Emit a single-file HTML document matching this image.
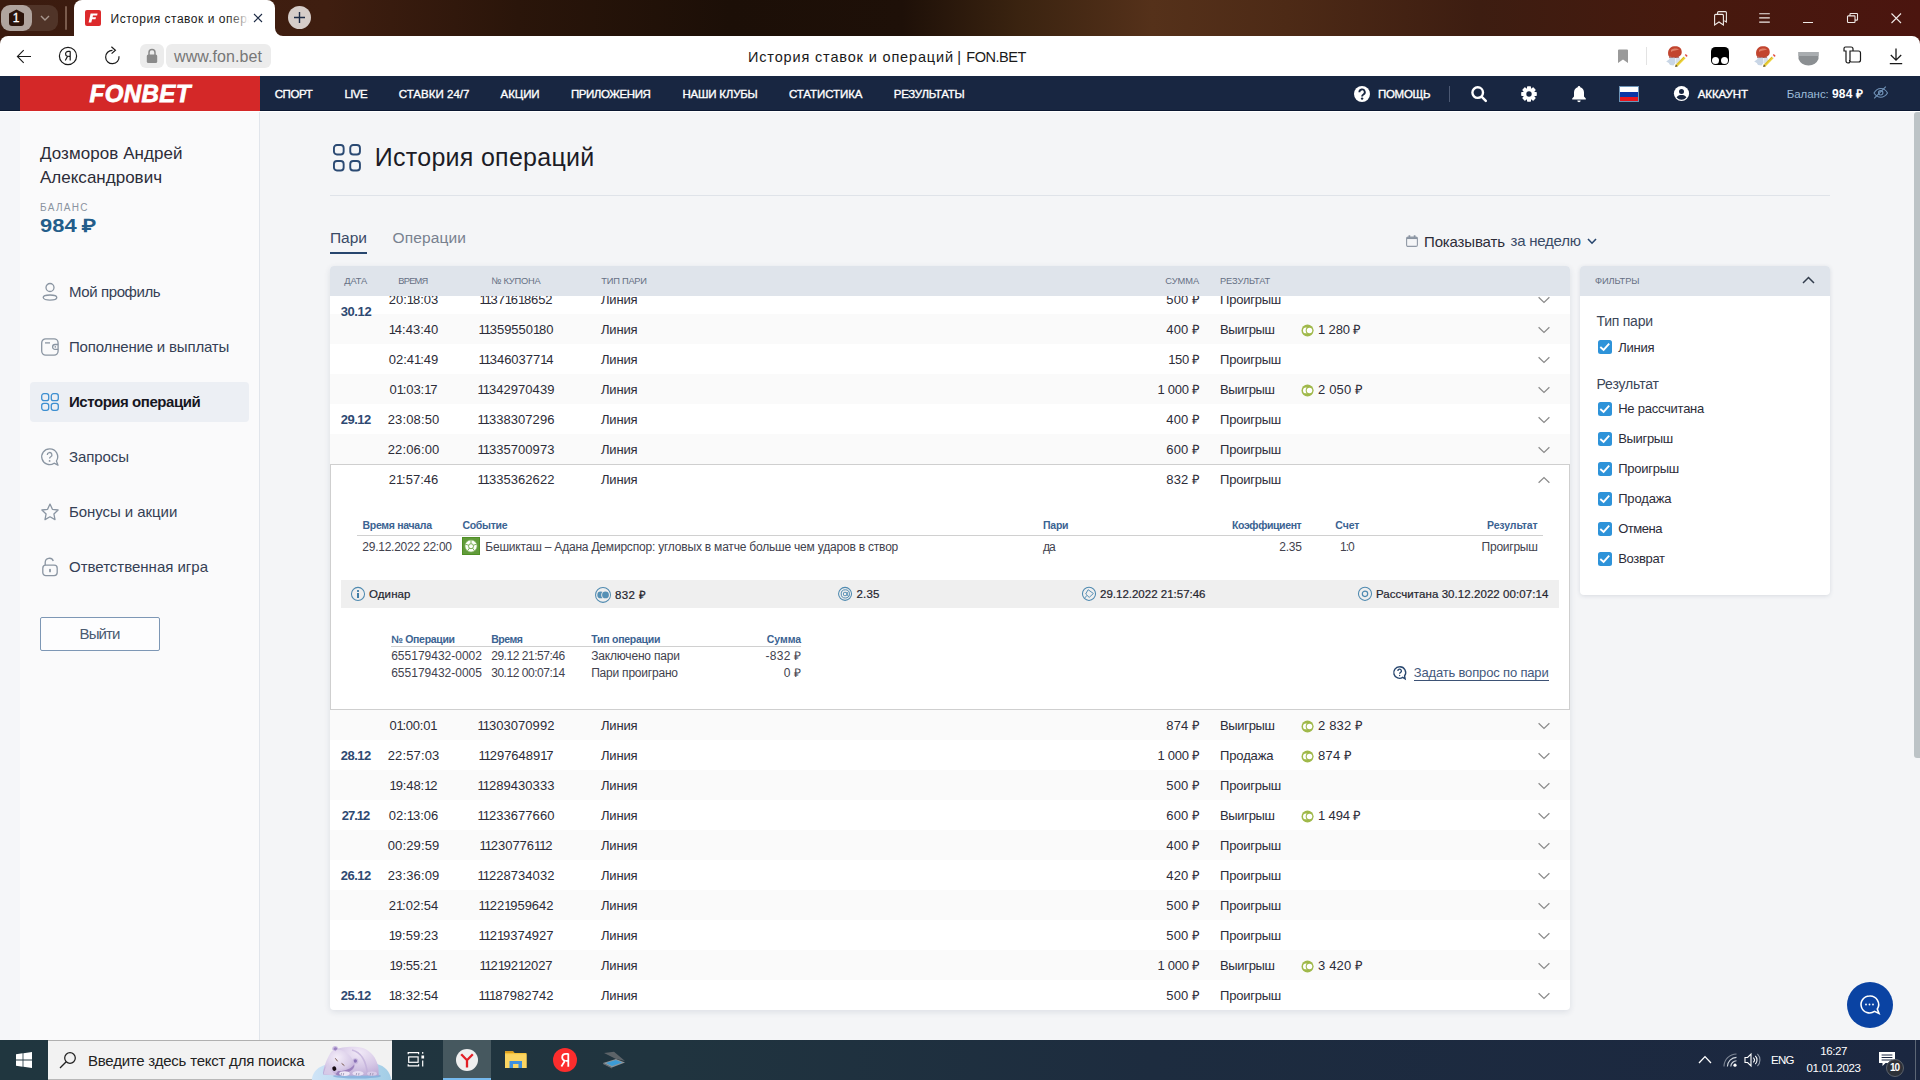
<!DOCTYPE html>
<html lang="ru"><head><meta charset="utf-8"><title>История ставок и операций | FON.BET</title>
<style>
*{box-sizing:border-box;margin:0;padding:0}
html,body{width:1920px;height:1080px;overflow:hidden;background:#f4f5f7;font-family:"Liberation Sans",sans-serif}
#root{position:relative;width:1920px;height:1080px;overflow:hidden;background:#f4f5f7}
.t{position:absolute;white-space:pre;font-family:"Liberation Sans",sans-serif}
.a{position:absolute}
svg{position:absolute;overflow:visible}
.t i{font-style:normal}

</style></head><body>
<div id="root">
<!-- browser tab strip -->
<div class="a" style="left:0;top:0;width:1920px;height:46px;background:linear-gradient(90deg,#3b1b0f 0%,#3f1e10 17%,#2a150a 27%,#1c0f07 38%,#1e1008 47%,#3a2310 53%,#55311a 60%,#4d2a16 67%,#3d1d11 77%,#46190e 88%,#4b150f 100%)"></div>
<div class="a" style="left:2px;top:5px;width:56px;height:26px;border-radius:9px;background:#503428"></div>
<div class="a" style="left:1px;top:5px;width:31px;height:26px;border-radius:9px;background:#b0a49e"></div>
<svg style="left:8px;top:9px" width="17" height="18" viewBox="0 0 17 18"><path d="M8.5 0.6 L16 4.6 V14 a3 3 0 0 1 -3 3 H4 a3 3 0 0 1 -3 -3 V4.6 Z" fill="#2b130a"/></svg>
<svg style="left:40px;top:14px" width="10" height="8" viewBox="0 0 10 8"><path d="M1 2 L5 6 L9 2" fill="none" stroke="#a8978f" stroke-width="1.4"/></svg>
<div class="a" style="left:65px;top:6px;width:2px;height:24px;background:#7a5b4c;border-radius:1px"></div>
<!-- active tab -->
<div class="a" style="left:74px;top:0;width:201px;height:36px;background:#fff;border-radius:8px 8px 0 0"></div>
<svg style="left:275px;top:28px" width="8" height="8" viewBox="0 0 8 8"><path d="M0 0 V8 H8 A8 8 0 0 1 0 0Z" fill="#fff"/></svg>
<div class="a" style="left:85px;top:10px;width:16px;height:16px;background:#dc2a2c;border-radius:2px"></div>
<svg style="left:88px;top:13px" width="10" height="10" viewBox="0 0 10 10"><path d="M2.6 0.5 H9.6 L9.1 2.6 H5 L4.6 4.2 H8 L7.5 6.2 H4.1 L3.3 9.5 H0.6 Z" fill="#fff"/></svg>
<div class="a" style="left:228px;top:8px;width:36px;height:22px;z-index:3;background:linear-gradient(90deg,rgba(255,255,255,0) 0%,rgba(255,255,255,.55) 36%,#fff 58%)"></div>
<svg style="left:253px;top:13px;z-index:4" width="10" height="10" viewBox="0 0 10 10"><path d="M1 1 L9 9 M9 1 L1 9" stroke="#1d2b45" stroke-width="1.1" fill="none"/></svg>
<div class="a" style="left:288px;top:6px;width:23px;height:23px;border-radius:50%;background:#d6cdc9"></div>
<svg style="left:293px;top:11px" width="13" height="13" viewBox="0 0 13 13"><path d="M6.5 1 V12 M1 6.5 H12" stroke="#1d2b45" stroke-width="1.4" fill="none"/></svg>
<!-- window controls -->
<svg style="left:1713.5px;top:10.5px" width="13" height="15" viewBox="0 0 13 15"><path d="M3.6 3.2 V1.6 a1 1 0 0 1 1 -1 H11.4 a1 1 0 0 1 1 1 V11 L10.4 9.8 M0.6 4.4 a1 1 0 0 1 1 -1 H8.4 a1 1 0 0 1 1 1 V14 L5 11 L0.6 14 Z" fill="none" stroke="#efe9e6" stroke-width="1.1"/></svg>
<svg style="left:1758.6px;top:12.6px" width="11" height="10" viewBox="0 0 11 10"><path d="M0.2 0.7 H10.8 M0.2 4.9 H10.8 M0.2 9.1 H10.8" stroke="#efe9e6" stroke-width="1.1"/></svg>
<div class="a" style="left:1803px;top:21.7px;width:10px;height:1.1px;background:#efe9e6"></div>
<svg style="left:1846.5px;top:12.8px" width="11" height="10" viewBox="0 0 11 10"><path d="M3 2.6 V1.2 a.7 .7 0 0 1 .7 -.7 H9.8 a.7 .7 0 0 1 .7 .7 V6.4 a.7 .7 0 0 1 -.7 .7 H8.2 M1.2 2.9 H7.3 a.7 .7 0 0 1 .7 .7 V8.8 a.7 .7 0 0 1 -.7 .7 H1.2 a.7 .7 0 0 1 -.7 -.7 V3.6 a.7 .7 0 0 1 .7 -.7Z" fill="none" stroke="#efe9e6" stroke-width="1.1"/></svg>
<svg style="left:1890.8px;top:12.8px" width="10.5" height="10.5" viewBox="0 0 10.5 10.5"><path d="M0.5 0.5 L10 10 M10 0.5 L0.5 10" stroke="#efe9e6" stroke-width="1.1"/></svg>

<!-- toolbar -->
<div class="a" style="left:0;top:36px;width:1920px;height:40px;background:#fff;border-radius:8px 8px 0 0"></div>
<svg style="left:16px;top:48px" width="16" height="17" viewBox="0 0 16 17"><path d="M15 8.5 H1.6 M7.7 2.2 L1.4 8.5 L7.7 14.8" fill="none" stroke="#1a1a1a" stroke-width="1.1"/></svg>
<svg style="left:58px;top:46px" width="20" height="20" viewBox="0 0 20 20"><circle cx="10" cy="10" r="8.6" fill="none" stroke="#1a1a1a" stroke-width="1.2"/><path d="M12.2 5.4 H10.3 C8.6 5.4 7.6 6.4 7.6 7.9 C7.6 9.2 8.3 10 9.5 10.3 L7.3 14.5 M12.2 5.2 V14.6 M12.2 10.4 H10.3" fill="none" stroke="#1a1a1a" stroke-width="1.2"/></svg>
<svg style="left:103.7px;top:45.6px" width="17" height="20" viewBox="0 0 17 20"><path d="M8.5 4.3 A6.7 6.7 0 1 0 15.0 10.2" fill="none" stroke="#1a1a1a" stroke-width="1.2"/><path d="M7.4 0.8 L11.4 4.2 L7.6 7.6" fill="none" stroke="#1a1a1a" stroke-width="1.2"/></svg>
<div class="a" style="left:140px;top:44px;width:24px;height:24px;border-radius:6px;background:#ececec"></div>
<div class="a" style="left:166px;top:44px;width:105px;height:24px;border-radius:6px;background:#ececec"></div>
<svg style="left:146px;top:48px" width="12" height="16" viewBox="0 0 12 16"><rect x="0.8" y="6.5" width="10.4" height="8.5" rx="1.6" fill="#8a8a8a"/><path d="M3 7 V4.5 a3 3 0 0 1 6 0 V7" fill="none" stroke="#8a8a8a" stroke-width="1.5"/></svg>
<!-- toolbar right icons -->
<svg style="left:1617px;top:49px" width="12" height="15" viewBox="0 0 12 15"><path d="M1 1.5 a1 1 0 0 1 1 -1 H10 a1 1 0 0 1 1 1 V14 L6 10.5 L1 14Z" fill="#9a9a9a"/></svg>
<div class="a" style="left:1646px;top:47px;width:1px;height:18px;background:#e3e3e3"></div>
<!-- ext icon 1 (kolobok) -->
<svg style="left:1665px;top:45px" width="24" height="24" viewBox="0 0 24 24"><path d="M3.6 11 C2 6 4.5 1.6 9 1.2 C13 0.8 16.5 2 16.7 6.5 C17 10 15 12 10.5 12 C7 12.2 4.5 12 3.6 11Z" fill="#c2452f"/><path d="M6 5 C8 3 12 3 14 4.5 C12 5 8 5.5 6 7Z" fill="#e58a72" opacity=".85"/><path d="M4 11.3 C6 12.3 10 12.4 14 11.6 L14 13 L4.5 13Z" fill="#9c2f22"/><path d="M5 12.5 L10 12.8 L10.5 18 L8.5 20.5 L5 20 L3.8 18 L1.2 16.6 L4 14.5Z" fill="#c9d6e6"/><path d="M10.5 12.8 L14.5 12.4 L15.5 16 L11 19 Z" fill="#d6e0ec"/><path d="M10.8 19.6 L18.6 11.4 L20.6 13.2 L12.8 21.2 L10.2 22Z" fill="#ecd23a"/><path d="M12 19.5 L19.2 12" stroke="#c9a81d" stroke-width="0.7"/><path d="M18.6 11.4 L19.8 10 L21.8 12 L20.6 13.2Z" fill="#f4f4f4"/><path d="M19.8 10 L20.8 9 L22.6 10.8 L21.8 12Z" fill="#e2453a"/><path d="M10.8 19.6 L12.8 21.2 L10.2 22Z" fill="#5a4a3a"/></svg>
<div class="a" style="left:1711px;top:47px;width:18px;height:18px;border-radius:4.5px;background:#000"></div>
<div class="a" style="left:1712.2px;top:56.6px;width:7px;height:7px;border-radius:50%;background:#fff"></div>
<div class="a" style="left:1720.8px;top:56.6px;width:7px;height:7px;border-radius:50%;background:#fff"></div>
<svg style="left:1753px;top:45px" width="24" height="24" viewBox="0 0 24 24"><path d="M3.6 11 C2 6 4.5 1.6 9 1.2 C13 0.8 16.5 2 16.7 6.5 C17 10 15 12 10.5 12 C7 12.2 4.5 12 3.6 11Z" fill="#c2452f"/><path d="M6 5 C8 3 12 3 14 4.5 C12 5 8 5.5 6 7Z" fill="#e58a72" opacity=".85"/><path d="M4 11.3 C6 12.3 10 12.4 14 11.6 L14 13 L4.5 13Z" fill="#9c2f22"/><path d="M5 12.5 L10 12.8 L10.5 18 L8.5 20.5 L5 20 L3.8 18 L1.2 16.6 L4 14.5Z" fill="#c9d6e6"/><path d="M10.5 12.8 L14.5 12.4 L15.5 16 L11 19 Z" fill="#d6e0ec"/><path d="M10.8 19.6 L18.6 11.4 L20.6 13.2 L12.8 21.2 L10.2 22Z" fill="#ecd23a"/><path d="M12 19.5 L19.2 12" stroke="#c9a81d" stroke-width="0.7"/><path d="M18.6 11.4 L19.8 10 L21.8 12 L20.6 13.2Z" fill="#f4f4f4"/><path d="M19.8 10 L20.8 9 L22.6 10.8 L21.8 12Z" fill="#e2453a"/><path d="M10.8 19.6 L12.8 21.2 L10.2 22Z" fill="#5a4a3a"/></svg>
<svg style="left:1798px;top:51px" width="21" height="15" viewBox="0 0 21 15"><path d="M0.5 1 H20.5 V8 Q18 14 10.5 14.5 Q3 14 0.5 8Z" fill="#8b8f92"/><path d="M0.5 1 H20.5 V5 H0.5Z" fill="#a9adb0"/></svg>
<svg style="left:1843px;top:46px" width="19" height="19" viewBox="0 0 19 19"><path d="M2.5 1 H8 a2 2 0 0 1 2 2 V5 H7 V15 a2 2 0 0 1 -4 0 V5 H1 V2.5 A1.5 1.5 0 0 1 2.5 1Z M8 5 H15.5 a2 2 0 0 1 2 2 V14 a2 2 0 0 1 -2 2 H8.5 a2 2 0 0 1 -2 -2" fill="none" stroke="#1a1a1a" stroke-width="1.2"/></svg>
<svg style="left:1889px;top:48px" width="14" height="17" viewBox="0 0 14 17"><path d="M7 0.5 V12 M1.8 7 L7 12.2 L12.2 7 M0.8 15.7 H13.2" fill="none" stroke="#1a1a1a" stroke-width="1.3"/></svg>

<!-- site header -->
<div class="a" style="left:0;top:76px;width:1920px;height:35px;background:#182641"></div>
<div class="a" style="left:0;top:110px;width:1920px;height:1px;background:#0a1730"></div>
<div class="a" style="left:0;top:111px;width:1920px;height:1px;background:#fff"></div>
<div class="a" style="left:20px;top:76px;width:240px;height:35px;background:#d42828"></div>
<!-- header icons -->
<svg style="left:1353px;top:85px" width="18" height="18" viewBox="0 0 18 18"><circle cx="9" cy="9" r="8" fill="#fff"/><path d="M6.4 7.2 a2.7 2.7 0 1 1 4 2.3 c-.9 .5 -1.3 1 -1.3 2" fill="none" stroke="#182641" stroke-width="1.9"/><circle cx="9.1" cy="13.6" r="1.2" fill="#182641"/></svg>
<div class="a" style="left:1449px;top:86px;width:1px;height:16px;background:#4b5872"></div>
<svg style="left:1470px;top:85px" width="18" height="18" viewBox="0 0 18 18"><circle cx="7.7" cy="7.6" r="5.3" fill="none" stroke="#fff" stroke-width="2.4"/><path d="M11.8 11.8 L15.8 15.8" stroke="#fff" stroke-width="2.5" stroke-linecap="round"/></svg>
<svg style="left:1520px;top:85px" width="18" height="18" viewBox="0 0 18 18"><g fill="#fff"><circle cx="9" cy="9" r="6"/><rect x="7" y="1.2" width="4" height="15.6" rx="0.7"/><rect x="7" y="1.2" width="4" height="15.6" rx="0.7" transform="rotate(45 9 9)"/><rect x="7" y="1.2" width="4" height="15.6" rx="0.7" transform="rotate(90 9 9)"/><rect x="7" y="1.2" width="4" height="15.6" rx="0.7" transform="rotate(135 9 9)"/></g><circle cx="9" cy="9" r="2.7" fill="#182641"/></svg>
<svg style="left:1571px;top:85px" width="16" height="18" viewBox="0 0 16 18"><path d="M8 1 C7.2 1 6.7 1.6 6.7 2.3 C4.2 3 3 5 3 7.5 V11.5 L1.2 13.6 V14.4 H14.8 V13.6 L13 11.5 V7.5 C13 5 11.8 3 9.3 2.3 C9.3 1.6 8.8 1 8 1Z" fill="#fff"/><path d="M6.3 15.5 a1.7 1.7 0 0 0 3.4 0Z" fill="#fff"/></svg>
<div class="a" style="left:1619px;top:86px;width:20px;height:16px;background:#fff;border:1px solid #6d95b8"></div>
<div class="a" style="left:1620px;top:92px;width:18px;height:5px;background:#0a36a6"></div>
<div class="a" style="left:1620px;top:97px;width:18px;height:4px;background:#e8161e"></div>
<svg style="left:1673px;top:85.4px" width="17" height="17" viewBox="0 0 17 17"><circle cx="8.5" cy="8.5" r="7.6" fill="#fff"/><circle cx="8.5" cy="6.4" r="2.5" fill="#182641"/><path d="M3.6 12.6 C4.6 10.6 6.4 10 8.5 10 C10.6 10 12.4 10.6 13.4 12.6 A6.5 6.5 0 0 1 3.6 12.6Z" fill="#182641"/></svg>
<svg style="left:1872.5px;top:85.5px" width="16" height="14" viewBox="0 0 16 14"><path d="M1 7 C3 3.6 5.3 2.5 7.7 2.5 C10.1 2.5 12.6 3.6 14.5 7 C12.6 10 10.1 11.2 7.7 11.2 C5.3 11.2 3 10 1 7Z" fill="none" stroke="#7193b8" stroke-width="1.1"/><circle cx="7.7" cy="6.8" r="2.2" fill="none" stroke="#7193b8" stroke-width="1.1"/><path d="M12.8 0.6 L1.2 12.3" stroke="#7193b8" stroke-width="1.1"/></svg>

<!-- sidebar -->
<div class="a" style="left:0;top:112px;width:20px;height:928px;background:#f5f6f9"></div>
<div class="a" style="left:20px;top:112px;width:240px;height:928px;background:#fafafb;border-right:1px solid #e1e5eb"></div>
<div class="a" style="left:30px;top:382px;width:219px;height:40px;border-radius:4px;background:#eceff4"></div>
<div class="a" style="left:40px;top:617px;width:120px;height:34px;border:1px solid #7d97b5;border-radius:2px;background:#fdfdfe"></div>
<!-- sidebar icons -->
<svg style="left:41px;top:282px" width="18" height="20" viewBox="0 0 18 20"><circle cx="9" cy="5.5" r="4" fill="none" stroke="#8a95a2" stroke-width="1.3"/><ellipse cx="9" cy="15.6" rx="6.8" ry="2.6" fill="none" stroke="#8a95a2" stroke-width="1.3"/></svg>
<svg style="left:41px;top:338px" width="18" height="18" viewBox="0 0 18 18"><rect x="0.7" y="0.9" width="16.4" height="16.2" rx="4" fill="none" stroke="#8a95a2" stroke-width="1.3"/><path d="M4 4.9 H9" stroke="#8a95a2" stroke-width="1.3"/><path d="M17.1 6.5 H14 a2.4 2.4 0 0 0 0 4.8 H17.1" fill="none" stroke="#8a95a2" stroke-width="1.3"/><circle cx="14.3" cy="8.9" r="0.8" fill="#8a95a2"/></svg>
<svg style="left:41px;top:393px" width="18" height="18" viewBox="0 0 18 18"><g fill="none" stroke="#3d8fd1" stroke-width="1.3"><rect x="0.7" y="0.7" width="7" height="7" rx="2.2"/><rect x="10.3" y="0.7" width="7" height="7" rx="2.2"/><rect x="0.7" y="10.3" width="7" height="7" rx="2.2"/><rect x="10.3" y="10.3" width="7" height="7" rx="2.2"/></g></svg>
<svg style="left:41px;top:448px" width="18" height="18" viewBox="0 0 18 18"><path d="M8.6 0.8 a7.9 7.9 0 1 0 4.5 14.4 L17 17.2 L15.4 13 A7.9 7.9 0 0 0 8.6 0.8Z" fill="none" stroke="#8a95a2" stroke-width="1.3" stroke-linejoin="round"/><path d="M6.3 6.9 a2.3 2.3 0 1 1 3.5 1.9 c-.8 .5 -1.2 .9 -1.2 1.8" fill="none" stroke="#8a95a2" stroke-width="1.3"/><circle cx="8.6" cy="12.9" r="0.9" fill="#8a95a2"/></svg>
<svg style="left:41px;top:503px" width="18" height="18" viewBox="0 0 18 18"><path d="M9 1.1 L11.4 6.3 L17.1 7 L12.9 10.9 L14 16.6 L9 13.8 L4 16.6 L5.1 10.9 L0.9 7 L6.6 6.3Z" fill="none" stroke="#8a95a2" stroke-width="1.3" stroke-linejoin="round"/></svg>
<svg style="left:42px;top:557px" width="17" height="20" viewBox="0 0 17 20"><rect x="0.8" y="8.2" width="14.4" height="10.4" rx="3" fill="none" stroke="#8a95a2" stroke-width="1.3"/><path d="M3.2 8 V5.4 a4.2 4.2 0 0 1 8.1 -1.5" fill="none" stroke="#8a95a2" stroke-width="1.3"/><path d="M8 12.6 V14.4" stroke="#8a95a2" stroke-width="1.8" stroke-linecap="round"/></svg>

<!-- main title -->
<svg style="left:332.7px;top:144px" width="28.3" height="27.4" viewBox="0 0 28.3 27.4"><g fill="none" stroke="#2b4a73" stroke-width="1.9"><rect x="0.95" y="0.95" width="9.7" height="9.5" rx="3"/><rect x="17.25" y="0.95" width="9.7" height="9.5" rx="3"/><rect x="0.95" y="16.95" width="9.7" height="9.5" rx="3"/><rect x="17.25" y="16.95" width="9.7" height="9.5" rx="3"/></g></svg>
<div class="a" style="left:330px;top:195px;width:1500px;height:1px;background:#dfe3e9"></div>
<div class="a" style="left:330px;top:252px;width:37px;height:2px;background:#27466e"></div>
<svg style="left:1406px;top:235px" width="12" height="12" viewBox="0 0 12 12"><rect x="0.6" y="2" width="10.8" height="9.4" rx="1.4" fill="none" stroke="#9099a6" stroke-width="1.1"/><path d="M0.8 3.1 H11.2" stroke="#8a94a2" stroke-width="1.9"/><path d="M3.4 0.3 V2.6 M8.6 0.3 V2.6" stroke="#8a94a2" stroke-width="1.7"/></svg>
<svg style="left:1587px;top:238px" width="10" height="7" viewBox="0 0 10 7"><path d="M1 1 L5 5.2 L9 1" fill="none" stroke="#27466e" stroke-width="1.6"/></svg>

<!-- table -->
<div class="a" style="left:330px;top:266px;width:1240px;height:744px;background:#fff;border-radius:4px;box-shadow:0 2px 6px rgba(30,50,80,.11)"></div>
<svg style="left:1537px;top:296px" width="14" height="8" viewBox="0 0 14 8"><path d="M1.6 1.2 L7 6.5 L12.4 1.2" fill="none" stroke="#8a8a8a" stroke-width="1.2"/></svg>
<div class="a" style="left:330px;top:314px;width:1240px;height:30px;background:#fafafa"></div>
<svg style="left:1537px;top:326px" width="14" height="8" viewBox="0 0 14 8"><path d="M1.6 1.2 L7 6.5 L12.4 1.2" fill="none" stroke="#8a8a8a" stroke-width="1.2"/></svg>
<svg style="left:1300.6px;top:323.6px" width="13" height="13" viewBox="0 0 13 13"><circle cx="6.5" cy="6.4" r="6" fill="#a0b94b"/><circle cx="4.9" cy="6.4" r="2.9" fill="#fff"/><circle cx="8.5" cy="6.4" r="3.8" fill="#a0b94b"/><circle cx="8.5" cy="6.4" r="2.75" fill="#fff"/></svg>
<svg style="left:1537px;top:356px" width="14" height="8" viewBox="0 0 14 8"><path d="M1.6 1.2 L7 6.5 L12.4 1.2" fill="none" stroke="#8a8a8a" stroke-width="1.2"/></svg>
<div class="a" style="left:330px;top:374px;width:1240px;height:30px;background:#fafafa"></div>
<svg style="left:1537px;top:386px" width="14" height="8" viewBox="0 0 14 8"><path d="M1.6 1.2 L7 6.5 L12.4 1.2" fill="none" stroke="#8a8a8a" stroke-width="1.2"/></svg>
<svg style="left:1300.6px;top:383.6px" width="13" height="13" viewBox="0 0 13 13"><circle cx="6.5" cy="6.4" r="6" fill="#a0b94b"/><circle cx="4.9" cy="6.4" r="2.9" fill="#fff"/><circle cx="8.5" cy="6.4" r="3.8" fill="#a0b94b"/><circle cx="8.5" cy="6.4" r="2.75" fill="#fff"/></svg>
<svg style="left:1537px;top:416px" width="14" height="8" viewBox="0 0 14 8"><path d="M1.6 1.2 L7 6.5 L12.4 1.2" fill="none" stroke="#8a8a8a" stroke-width="1.2"/></svg>
<div class="a" style="left:330px;top:434px;width:1240px;height:30px;background:#fafafa"></div>
<svg style="left:1537px;top:446px" width="14" height="8" viewBox="0 0 14 8"><path d="M1.6 1.2 L7 6.5 L12.4 1.2" fill="none" stroke="#8a8a8a" stroke-width="1.2"/></svg>
<div class="a" style="left:330px;top:710px;width:1240px;height:30px;background:#fafafa"></div>
<svg style="left:1537px;top:722px" width="14" height="8" viewBox="0 0 14 8"><path d="M1.6 1.2 L7 6.5 L12.4 1.2" fill="none" stroke="#8a8a8a" stroke-width="1.2"/></svg>
<svg style="left:1300.6px;top:719.6px" width="13" height="13" viewBox="0 0 13 13"><circle cx="6.5" cy="6.4" r="6" fill="#a0b94b"/><circle cx="4.9" cy="6.4" r="2.9" fill="#fff"/><circle cx="8.5" cy="6.4" r="3.8" fill="#a0b94b"/><circle cx="8.5" cy="6.4" r="2.75" fill="#fff"/></svg>
<svg style="left:1537px;top:752px" width="14" height="8" viewBox="0 0 14 8"><path d="M1.6 1.2 L7 6.5 L12.4 1.2" fill="none" stroke="#8a8a8a" stroke-width="1.2"/></svg>
<svg style="left:1300.6px;top:749.6px" width="13" height="13" viewBox="0 0 13 13"><circle cx="6.5" cy="6.4" r="6" fill="#a0b94b"/><circle cx="4.9" cy="6.4" r="2.9" fill="#fff"/><circle cx="8.5" cy="6.4" r="3.8" fill="#a0b94b"/><circle cx="8.5" cy="6.4" r="2.75" fill="#fff"/></svg>
<div class="a" style="left:330px;top:770px;width:1240px;height:30px;background:#fafafa"></div>
<svg style="left:1537px;top:782px" width="14" height="8" viewBox="0 0 14 8"><path d="M1.6 1.2 L7 6.5 L12.4 1.2" fill="none" stroke="#8a8a8a" stroke-width="1.2"/></svg>
<svg style="left:1537px;top:812px" width="14" height="8" viewBox="0 0 14 8"><path d="M1.6 1.2 L7 6.5 L12.4 1.2" fill="none" stroke="#8a8a8a" stroke-width="1.2"/></svg>
<svg style="left:1300.6px;top:809.6px" width="13" height="13" viewBox="0 0 13 13"><circle cx="6.5" cy="6.4" r="6" fill="#a0b94b"/><circle cx="4.9" cy="6.4" r="2.9" fill="#fff"/><circle cx="8.5" cy="6.4" r="3.8" fill="#a0b94b"/><circle cx="8.5" cy="6.4" r="2.75" fill="#fff"/></svg>
<div class="a" style="left:330px;top:830px;width:1240px;height:30px;background:#fafafa"></div>
<svg style="left:1537px;top:842px" width="14" height="8" viewBox="0 0 14 8"><path d="M1.6 1.2 L7 6.5 L12.4 1.2" fill="none" stroke="#8a8a8a" stroke-width="1.2"/></svg>
<svg style="left:1537px;top:872px" width="14" height="8" viewBox="0 0 14 8"><path d="M1.6 1.2 L7 6.5 L12.4 1.2" fill="none" stroke="#8a8a8a" stroke-width="1.2"/></svg>
<div class="a" style="left:330px;top:890px;width:1240px;height:30px;background:#fafafa"></div>
<svg style="left:1537px;top:902px" width="14" height="8" viewBox="0 0 14 8"><path d="M1.6 1.2 L7 6.5 L12.4 1.2" fill="none" stroke="#8a8a8a" stroke-width="1.2"/></svg>
<svg style="left:1537px;top:932px" width="14" height="8" viewBox="0 0 14 8"><path d="M1.6 1.2 L7 6.5 L12.4 1.2" fill="none" stroke="#8a8a8a" stroke-width="1.2"/></svg>
<div class="a" style="left:330px;top:950px;width:1240px;height:30px;background:#fafafa"></div>
<svg style="left:1537px;top:962px" width="14" height="8" viewBox="0 0 14 8"><path d="M1.6 1.2 L7 6.5 L12.4 1.2" fill="none" stroke="#8a8a8a" stroke-width="1.2"/></svg>
<svg style="left:1300.6px;top:959.6px" width="13" height="13" viewBox="0 0 13 13"><circle cx="6.5" cy="6.4" r="6" fill="#a0b94b"/><circle cx="4.9" cy="6.4" r="2.9" fill="#fff"/><circle cx="8.5" cy="6.4" r="3.8" fill="#a0b94b"/><circle cx="8.5" cy="6.4" r="2.75" fill="#fff"/></svg>
<svg style="left:1537px;top:992px" width="14" height="8" viewBox="0 0 14 8"><path d="M1.6 1.2 L7 6.5 L12.4 1.2" fill="none" stroke="#8a8a8a" stroke-width="1.2"/></svg>
<div class="a" style="left:330px;top:266px;width:1240px;height:30px;background:#dfe4eb;border-radius:4px 4px 0 0;z-index:1"></div>
<!-- expanded -->
<div class="a" style="left:330px;top:464px;width:1240px;height:246px;background:#fff;border:1px solid #cfcfcf"></div>
<div class="a" style="left:357px;top:535px;width:1186px;height:1px;background:#d0d0d0"></div>
<div class="a" style="left:341px;top:580px;width:1218px;height:28px;background:#efefef"></div>
<div class="a" style="left:391px;top:646px;width:410px;height:1px;background:#d0d0d0"></div>
<div class="a" style="left:1413.5px;top:680px;width:135.5px;height:1px;background:#3d5275"></div>
<!-- soccer icon -->
<div class="a" style="left:462px;top:537px;width:18px;height:18px;background:#619b3a;border:1px solid #4f8f25"></div>
<svg style="left:462px;top:537px" width="18" height="18" viewBox="0 0 18 18"><circle cx="9" cy="9" r="6" fill="#fbfdf8"/><circle cx="9" cy="9.2" r="2.5" fill="none" stroke="#6ea64a" stroke-width="0.9"/><path d="M9.00 6.50 L9.00 2.90 M6.62 8.23 L3.20 7.11 M11.38 8.23 L14.80 7.11 M7.53 11.02 L5.41 13.94 M10.47 11.02 L12.59 13.94" stroke="#6ea64a" stroke-width="0.9" fill="none"/><circle cx="9" cy="9" r="6" fill="none" stroke="#8bb96d" stroke-width="0.6"/></svg>
<!-- bar icons -->
<svg style="left:351px;top:587px" width="14" height="14" viewBox="0 0 14 14"><circle cx="7" cy="6.9" r="6.55" fill="none" stroke="#4f8ab0" stroke-width="1.05"/><path d="M7 6.1 V10.9" stroke="#3f7da6" stroke-width="2"/><rect x="6" y="3.1" width="2" height="1.8" fill="#3f7da6"/></svg>
<svg style="left:595px;top:587px" width="16" height="16" viewBox="0 0 16 16"><circle cx="8" cy="7.9" r="7.45" fill="none" stroke="#4f8ab0" stroke-width="1.05"/><circle cx="5.7" cy="7.9" r="3.4" fill="#5590b5"/><circle cx="10.5" cy="7.9" r="4.3" fill="#efefef"/><circle cx="10.5" cy="7.9" r="3.4" fill="#5590b5"/></svg>
<svg style="left:838px;top:587px" width="14" height="14" viewBox="0 0 14 14"><circle cx="7.05" cy="6.85" r="6.5" fill="none" stroke="#4f8ab0" stroke-width="1.05"/><circle cx="7.3" cy="6.9" r="4.1" fill="none" stroke="#4f8ab0" stroke-width="1"/><rect x="5.5" y="5.4" width="3.2" height="3.2" rx="0.8" fill="none" stroke="#4f8ab0" stroke-width="1"/><path d="M9.3 5 V8.2 a1.2 1.2 0 0 0 2.1 .5" fill="none" stroke="#4f8ab0" stroke-width="0.9"/></svg>
<svg style="left:1082px;top:587px" width="14" height="14" viewBox="0 0 14 14"><circle cx="7" cy="6.85" r="6.55" fill="none" stroke="#4f8ab0" stroke-width="1.05"/><path d="M6.1 2.7 L11.4 6.5 L7.2 10.4 L3.7 7 Z" fill="none" stroke="#5a92b7" stroke-width="1" stroke-linejoin="round"/><path d="M4.9 8.4 L2.9 10.9" stroke="#5a92b7" stroke-width="1"/></svg>
<svg style="left:1358px;top:587px" width="14" height="14" viewBox="0 0 14 14"><circle cx="7" cy="6.85" r="6.55" fill="none" stroke="#4f8ab0" stroke-width="1.05"/><circle cx="7" cy="6.85" r="2.7" fill="none" stroke="#4f8ab0" stroke-width="1.2"/></svg>
<svg style="left:1393px;top:666.3px" width="14" height="14" viewBox="0 0 15 15"><path d="M7 0.8 a6.2 6.2 0 1 0 3.4 11.4 L13 13.8 L12.4 10.6 A6.2 6.2 0 0 0 7 0.8Z" fill="none" stroke="#27466e" stroke-width="1.5"/><path d="M5.2 5.4 a1.9 1.9 0 1 1 2.8 1.6 c-.6 .4 -.9 .7 -.9 1.4" fill="none" stroke="#27466e" stroke-width="1.4"/><circle cx="7.1" cy="10.2" r="0.75" fill="#27466e"/></svg>
<svg style="left:1537px;top:476px" width="14" height="8" viewBox="0 0 14 8"><path d="M1.6 6.8 L7 1.5 L12.4 6.8" fill="none" stroke="#8a8a8a" stroke-width="1.2"/></svg>

<!-- filters -->
<div class="a" style="left:1580px;top:266px;width:250px;height:329px;background:#fff;border-radius:4px;box-shadow:0 1px 4px rgba(30,50,80,.13)"></div>
<div class="a" style="left:1580px;top:266px;width:250px;height:30px;background:#dfe4eb;border-radius:4px 4px 0 0"></div>
<svg style="left:1802px;top:276px" width="13" height="8" viewBox="0 0 13 8"><path d="M1 7 L6.5 1.5 L12 7" fill="none" stroke="#333d4d" stroke-width="1.5"/></svg>
<div class="a" style="left:1598px;top:340.0px;width:14px;height:14px;border-radius:2.5px;background:#2e93d9"></div>
<svg style="left:1598px;top:340.0px" width="14" height="14" viewBox="0 0 14 14"><path d="M2.3 7 L5.6 9.9 L11.2 3.7" fill="none" stroke="#fff" stroke-width="1.9"/></svg>
<div class="a" style="left:1598px;top:401.8px;width:14px;height:14px;border-radius:2.5px;background:#2e93d9"></div>
<svg style="left:1598px;top:401.8px" width="14" height="14" viewBox="0 0 14 14"><path d="M2.3 7 L5.6 9.9 L11.2 3.7" fill="none" stroke="#fff" stroke-width="1.9"/></svg>
<div class="a" style="left:1598px;top:431.8px;width:14px;height:14px;border-radius:2.5px;background:#2e93d9"></div>
<svg style="left:1598px;top:431.8px" width="14" height="14" viewBox="0 0 14 14"><path d="M2.3 7 L5.6 9.9 L11.2 3.7" fill="none" stroke="#fff" stroke-width="1.9"/></svg>
<div class="a" style="left:1598px;top:461.8px;width:14px;height:14px;border-radius:2.5px;background:#2e93d9"></div>
<svg style="left:1598px;top:461.8px" width="14" height="14" viewBox="0 0 14 14"><path d="M2.3 7 L5.6 9.9 L11.2 3.7" fill="none" stroke="#fff" stroke-width="1.9"/></svg>
<div class="a" style="left:1598px;top:491.8px;width:14px;height:14px;border-radius:2.5px;background:#2e93d9"></div>
<svg style="left:1598px;top:491.8px" width="14" height="14" viewBox="0 0 14 14"><path d="M2.3 7 L5.6 9.9 L11.2 3.7" fill="none" stroke="#fff" stroke-width="1.9"/></svg>
<div class="a" style="left:1598px;top:521.8px;width:14px;height:14px;border-radius:2.5px;background:#2e93d9"></div>
<svg style="left:1598px;top:521.8px" width="14" height="14" viewBox="0 0 14 14"><path d="M2.3 7 L5.6 9.9 L11.2 3.7" fill="none" stroke="#fff" stroke-width="1.9"/></svg>
<div class="a" style="left:1598px;top:551.8px;width:14px;height:14px;border-radius:2.5px;background:#2e93d9"></div>
<svg style="left:1598px;top:551.8px" width="14" height="14" viewBox="0 0 14 14"><path d="M2.3 7 L5.6 9.9 L11.2 3.7" fill="none" stroke="#fff" stroke-width="1.9"/></svg>

<!-- chat button -->
<div class="a" style="left:1847px;top:982px;width:46px;height:46px;border-radius:50%;background:#0a43a3"></div>
<svg style="left:1858px;top:993px" width="24" height="24" viewBox="0 0 24 24"><path d="M11.5 3 a8.5 8.5 0 1 0 5 15.4 L21 20.5 L19.3 16 A8.5 8.5 0 0 0 11.5 3Z" fill="none" stroke="#fff" stroke-width="1.6"/><circle cx="8" cy="11.5" r="0.9" fill="#fff"/><circle cx="11.5" cy="11.5" r="0.9" fill="#fff"/><circle cx="15" cy="11.5" r="0.9" fill="#fff"/></svg>
<!-- scrollbar thumb -->
<div class="a" style="left:1914px;top:112px;width:6px;height:646px;background:#bcc3c6;border-radius:3px 0 0 3px"></div>

<!-- taskbar -->
<div class="a" style="left:0;top:1040px;width:1920px;height:40px;background:linear-gradient(90deg,#20363f 0%,#20343f 35%,#1d2c3f 60%,#1b2740 100%)"></div>
<div class="a" style="left:48px;top:1040px;width:344px;height:40px;background:#f2f2f2;border-top:1px solid #b0b0b0;border-bottom:1px solid #b8b8b8"></div>
<svg style="left:16px;top:1052px" width="16" height="16" viewBox="0 0 16 16"><path d="M0 2.2 L6.6 1.3 V7.6 H0Z M7.4 1.2 L16 0 V7.6 H7.4Z M0 8.4 H6.6 V14.7 L0 13.8Z M7.4 8.4 H16 V16 L7.4 14.8Z" fill="#fff"/></svg>
<svg style="left:59px;top:1051px" width="18" height="18" viewBox="0 0 18 18"><circle cx="11" cy="7" r="5.3" fill="none" stroke="#222" stroke-width="1.25"/><path d="M7.2 10.8 L1 17" stroke="#222" stroke-width="1.3"/></svg>
<!-- bear -->
<svg style="left:305px;top:1041px;overflow:hidden" width="87" height="39" viewBox="0 3 87 39"><defs>
<linearGradient id="ice" x1="0" x2="1" y1="0" y2="0"><stop offset="0" stop-color="#cfe4f7"/><stop offset="1" stop-color="#a2cde6"/></linearGradient>
<radialGradient id="bd" cx="0.55" cy="0.2" r="0.9"><stop offset="0" stop-color="#f1e9f7"/><stop offset="0.55" stop-color="#d6c8e6"/><stop offset="1" stop-color="#b9a5d3"/></radialGradient>
<radialGradient id="hd" cx="0.45" cy="0.3" r="0.75"><stop offset="0" stop-color="#f3ecf8"/><stop offset="0.6" stop-color="#d9cce8"/><stop offset="1" stop-color="#b29bcf"/></radialGradient>
</defs>
<path d="M6.9 42 C7.3 35.5 11 30 19 27.3 C24 26 30 25.7 36 25.7 L72 25.9 C79.5 27.8 85.3 33.5 86.3 42 Z" fill="url(#ice)"/>
<ellipse cx="52" cy="38" rx="24" ry="2.6" fill="#7fa9d9" opacity=".75"/>
<path d="M30 12 C36 8.5 50 7.8 58 10 C66 13 71.5 20 73.3 29 L73.8 37.6 L36 37.8 Z" fill="url(#bd)"/>
<path d="M47 12 C55 14 61 22 62.5 36" fill="none" stroke="#c2b0d9" stroke-width="1.6" opacity=".8"/>
<circle cx="50.3" cy="23.2" r="3" fill="#cbbbe0"/><circle cx="50.3" cy="23" r="1.7" fill="#8a72b6"/>
<path d="M18.3 36.6 C18 31 20.5 24 24 17.5 C25.5 14.5 27 12.6 28.5 12 C31 11 36 11.5 40 14 C45 17 49 22 49.5 27 C50 31 46 33.5 40 35 L34 37.6 Z" fill="url(#hd)"/>
<path d="M27.3 11.7 a3 3 0 0 1 6 -1.2 L30.5 13.3Z" fill="#cdbde2"/><path d="M28.6 11.6 a1.9 1.9 0 0 1 3.8 -0.7 L30.4 12.6Z" fill="#9a82c0"/>
<path d="M33 33 C39 33.5 46 31 49.3 26.5 C49.5 30.5 46 33.7 40 35.2 L35 37.4 L30 37Z" fill="#8f72b3" opacity=".75"/>
<path d="M18.6 36.6 C19 33 21 28.5 23.5 25 C24 30 27 35 33 37.5Z" fill="#d9cde9" opacity=".9"/>
<ellipse cx="29.3" cy="30.6" rx="2" ry="2.3" fill="#170b12" transform="rotate(-20 29.3 30.6)"/>
<path d="M30.3 20.3 L32.6 23.3" stroke="#6d4c3c" stroke-width="0.9"/><path d="M36.6 25.4 L39.4 27.6" stroke="#6d4c3c" stroke-width="0.9"/>
<ellipse cx="39.5" cy="35.6" rx="5.2" ry="2.3" fill="#eee7f6"/><ellipse cx="53" cy="35.4" rx="5.5" ry="2.4" fill="#e9e0f3"/><ellipse cx="67" cy="35.6" rx="5" ry="2.2" fill="#d8cbe8"/>
<path d="M36.6 35 L36 37.4 M38.7 35 L38.3 37.4 M51.6 35 L51.2 37.4 M54 35 L53.6 37.4 M65.6 35 L65.2 37.4 M68 35 L67.6 37.4" stroke="#8c86a6" stroke-width="0.7"/>
</svg>
<!-- task view -->
<svg style="left:407px;top:1051px" width="18" height="18" viewBox="0 0 18 18"><path d="M1.2 3.2 V1.6 H11.6 V3.2 M1.2 13.2 V14.9 H11.6 V13.2" fill="none" stroke="#fff" stroke-width="1.2"/><rect x="1.7" y="5.9" width="9.4" height="5.4" fill="none" stroke="#fff" stroke-width="1.2"/><path d="M15.7 1 V2.8 M15.7 9.6 V15.4" stroke="#fff" stroke-width="1.2"/><rect x="14.4" y="4.5" width="2.7" height="3" fill="#fff"/></svg>
<div class="a" style="left:443px;top:1040px;width:48px;height:40px;background:#46585f"></div>
<div class="a" style="left:443px;top:1078px;width:48px;height:2px;background:#76b9ed"></div>
<div class="a" style="left:456px;top:1049px;width:22px;height:22px;border-radius:50%;background:#efefef"></div>
<svg style="left:460px;top:1053px" width="14" height="15" viewBox="0 0 14 15"><path d="M1.2 1.2 L7 7.2 L12.8 1.2 M7 7 V14.5" fill="none" stroke="#e21f26" stroke-width="2.3"/></svg>
<svg style="left:505px;top:1050px" width="22" height="19" viewBox="0 0 22 19"><path d="M0 1.2 H8 L9.5 3 H21.5 V18 H0Z" fill="#f4c33c"/><path d="M0 1.2 H8 L9.5 3 H0Z" fill="#dc9d1c"/><path d="M0 4.2 H21.5 V18 H0Z" fill="#fbd562"/><path d="M4.5 11 H17 V18 H13.5 V14 H8 V18 H4.5Z" fill="#3d8fe0"/></svg>
<div class="a" style="left:553px;top:1048px;width:24px;height:24px;border-radius:50%;background:#fc2d2d"></div>
<svg style="left:560px;top:1053px" width="10" height="14" viewBox="0 0 10 14"><path d="M8.3 0.8 H6 C3.6 0.8 2.2 2.2 2.2 4.3 C2.2 6.2 3.2 7.3 4.9 7.8 L1.4 13.5 M8.3 0.5 V13.7 M8.3 7.9 H6" fill="none" stroke="#fff" stroke-width="1.8"/></svg>
<svg style="left:602px;top:1051px" width="24" height="18" viewBox="0 0 24 18"><path d="M1 12 L14 8 L23 11.5 L10 16.5Z" fill="#8d9499"/><path d="M4 12 L14 9 L20 11.5 L10 15Z" fill="#3c9bd6"/><path d="M2 2 L12 0.8 L23 10 L14 8Z" fill="#5c6368"/><path d="M1 12 L10 16.5 V17.6 L1 13Z" fill="#6d7479"/></svg>
<!-- tray -->
<svg style="left:1698px;top:1055px" width="14" height="9" viewBox="0 0 14 9"><path d="M1 8 L7 1.6 L13 8" fill="none" stroke="#fff" stroke-width="1.3"/></svg>
<svg style="left:1723px;top:1053px" width="15" height="15" viewBox="0 0 15 15"><g fill="none" stroke="#cfd5dd" stroke-width="1.1"><path d="M1 13.5 A12.5 12.5 0 0 1 13.5 1" opacity=".55"/><path d="M4.4 13.5 A9.2 9.2 0 0 1 13.5 4.4"/><path d="M7.8 13.5 A5.8 5.8 0 0 1 13.5 7.8"/></g><circle cx="12" cy="12.2" r="1.6" fill="#fff"/></svg>
<svg style="left:1744px;top:1052px" width="18" height="16" viewBox="0 0 18 16"><path d="M1 5.5 H3.6 L7 2 V14 L3.6 10.5 H1Z" fill="none" stroke="#fff" stroke-width="1.1"/><path d="M9.3 5.6 a3.4 3.4 0 0 1 0 4.8 M11.3 3.8 a6 6 0 0 1 0 8.4" fill="none" stroke="#fff" stroke-width="1.1"/><path d="M13.4 1.8 a8.8 8.8 0 0 1 0 12.4" fill="none" stroke="#8c96a5" stroke-width="1.1"/></svg>
<svg style="left:1879px;top:1052px" width="17" height="15" viewBox="0 0 17 15"><path d="M0 0 H16 V11 H6.5 L3.5 14 V11 H0Z" fill="#fff"/><path d="M2.6 3 H13.4 M2.6 5.5 H13.4 M2.6 8 H13.4" stroke="#1b2740" stroke-width="1"/></svg>
<div class="a" style="left:1886px;top:1058.5px;width:18px;height:18px;border-radius:50%;background:#2d3138;border:1.2px solid #5c626b"></div>
<div class="a" style="left:1915px;top:1040px;width:1px;height:40px;background:#5c6675"></div>

<span class="t" style="font-size:12px;line-height:17px;top:11.00px;color:#1a1a1a;letter-spacing:0.517px;left:110.50px;">История ставок и опера</span>
<span class="t" style="font-size:16px;line-height:22px;top:46.00px;color:#777777;letter-spacing:0.084px;left:174.00px;">www.fon.bet</span>
<span class="t" style="font-size:14.5px;line-height:20px;top:47.00px;color:#1a1a1a;letter-spacing:0.842px;left:748.00px;">История ставок и операций</span>
<span class="t" style="font-size:14.5px;line-height:20px;top:47.00px;color:#1a1a1a;left:957.30px;">|</span>
<span class="t" style="font-size:14.5px;line-height:20px;top:47.00px;color:#1a1a1a;letter-spacing:-0.474px;left:966.30px;">FON.BET</span>
<span class="t" style="font-size:24px;line-height:34px;top:77.00px;color:#ffffff;font-weight:700;font-style:italic;letter-spacing:0.466px;left:89.50px;-webkit-text-stroke:0.8px #fff;">FONBET</span>
<span class="t" style="font-size:11.5px;line-height:16px;top:86.00px;color:#ffffff;letter-spacing:-0.376px;left:274.70px;-webkit-text-stroke:0.35px #fff;">СПОРТ</span>
<span class="t" style="font-size:11.5px;line-height:16px;top:86.00px;color:#ffffff;letter-spacing:-0.613px;left:344.50px;-webkit-text-stroke:0.35px #fff;">LIVE</span>
<span class="t" style="font-size:11.5px;line-height:16px;top:86.00px;color:#ffffff;letter-spacing:0.035px;left:398.70px;-webkit-text-stroke:0.35px #fff;">СТАВКИ 24/7</span>
<span class="t" style="font-size:11.5px;line-height:16px;top:86.00px;color:#ffffff;letter-spacing:-0.105px;left:500.60px;-webkit-text-stroke:0.35px #fff;">АКЦИИ</span>
<span class="t" style="font-size:11.5px;line-height:16px;top:86.00px;color:#ffffff;letter-spacing:-0.412px;left:570.90px;-webkit-text-stroke:0.35px #fff;">ПРИЛОЖЕНИЯ</span>
<span class="t" style="font-size:11.5px;line-height:16px;top:86.00px;color:#ffffff;letter-spacing:-0.207px;left:682.40px;-webkit-text-stroke:0.35px #fff;">НАШИ КЛУБЫ</span>
<span class="t" style="font-size:11.5px;line-height:16px;top:86.00px;color:#ffffff;letter-spacing:-0.069px;left:788.90px;-webkit-text-stroke:0.35px #fff;">СТАТИСТИКА</span>
<span class="t" style="font-size:11.5px;line-height:16px;top:86.00px;color:#ffffff;letter-spacing:-0.290px;left:893.80px;-webkit-text-stroke:0.35px #fff;">РЕЗУЛЬТАТЫ</span>
<span class="t" style="font-size:11.5px;line-height:16px;top:86.00px;color:#ffffff;letter-spacing:-0.296px;left:1378.00px;-webkit-text-stroke:0.35px #fff;">ПОМОЩЬ</span>
<span class="t" style="font-size:11.5px;line-height:16px;top:86.00px;color:#ffffff;letter-spacing:-0.079px;left:1697.70px;-webkit-text-stroke:0.35px #fff;">АККАУНТ</span>
<span class="t" style="font-size:11.5px;line-height:16px;top:86.00px;color:#9dbcd9;letter-spacing:-0.060px;left:1786.80px;">Баланс:</span>
<span class="t" style="font-size:12px;line-height:17px;top:86.00px;color:#ffffff;font-weight:700;letter-spacing:0.160px;left:1832.00px;">984 ₽</span>
<span class="t" style="font-size:17px;line-height:24px;top:142.00px;color:#2c2c38;letter-spacing:0.062px;left:40.00px;">Дозморов Андрей</span>
<span class="t" style="font-size:17px;line-height:24px;top:166.00px;color:#2c2c38;letter-spacing:0.008px;left:40.00px;">Александрович</span>
<span class="t" style="font-size:10px;line-height:14px;top:201.00px;color:#8a93a0;letter-spacing:1.336px;left:40.00px;">БАЛАНС</span>
<span class="t" style="font-size:18px;line-height:25px;top:214.00px;color:#235d8a;font-weight:700;left:39.80px;transform:scaleX(1.2181);transform-origin:0 50%;">984</span>
<span class="t" style="font-size:18px;line-height:25px;top:214.00px;color:#235d8a;font-weight:700;left:82.20px;transform:scaleX(1.3400);transform-origin:0 50%;">₽</span>
<span class="t" style="font-size:15px;line-height:21px;top:281.00px;color:#353f55;letter-spacing:-0.396px;left:69.00px;">Мой профиль</span>
<span class="t" style="font-size:15px;line-height:21px;top:336.00px;color:#353f55;letter-spacing:-0.177px;left:69.00px;">Пополнение и выплаты</span>
<span class="t" style="font-size:15px;line-height:21px;top:391.00px;color:#16161f;font-weight:700;letter-spacing:-0.452px;left:69.00px;">История операций</span>
<span class="t" style="font-size:15px;line-height:21px;top:446.00px;color:#353f55;letter-spacing:-0.083px;left:69.00px;">Запросы</span>
<span class="t" style="font-size:15px;line-height:21px;top:501.00px;color:#353f55;letter-spacing:-0.059px;left:69.00px;">Бонусы и акции</span>
<span class="t" style="font-size:15px;line-height:21px;top:556.00px;color:#353f55;letter-spacing:-0.008px;left:69.00px;">Ответственная игра</span>
<span class="t" style="font-size:15px;line-height:21px;top:623.00px;color:#4a5a70;letter-spacing:-0.855px;left:79.50px;">Выйти</span>
<span class="t" style="font-size:25px;line-height:35px;top:140.00px;color:#1c1c26;letter-spacing:0.287px;left:374.70px;">История операций</span>
<span class="t" style="font-size:15.5px;line-height:22px;top:227.00px;color:#3a4a66;letter-spacing:-0.016px;left:330.00px;">Пари</span>
<span class="t" style="font-size:15.5px;line-height:22px;top:227.00px;color:#78818f;letter-spacing:0.141px;left:392.50px;">Операции</span>
<span class="t" style="font-size:15px;line-height:21px;top:231.00px;color:#2c2c38;letter-spacing:-0.151px;left:1424.00px;">Показывать</span>
<span class="t" style="font-size:15px;line-height:21px;top:230.00px;color:#3a4a66;letter-spacing:-0.225px;left:1510.50px;">за неделю</span>
<span class="t" style="font-size:9.3px;line-height:13px;top:275.00px;color:#667084;letter-spacing:-0.115px;left:344.30px;z-index:2;">ДАТА</span>
<span class="t" style="font-size:9.3px;line-height:13px;top:275.00px;color:#667084;letter-spacing:-0.766px;left:398.30px;z-index:2;">ВРЕМЯ</span>
<span class="t" style="font-size:9.3px;line-height:13px;top:275.00px;color:#667084;letter-spacing:-0.202px;left:491.30px;z-index:2;">№ КУПОНА</span>
<span class="t" style="font-size:9.3px;line-height:13px;top:275.00px;color:#667084;letter-spacing:-0.244px;left:601.30px;z-index:2;">ТИП ПАРИ</span>
<span class="t" style="font-size:9.3px;line-height:13px;top:275.00px;color:#667084;left:1165.30px;z-index:2;">СУММА</span>
<span class="t" style="font-size:9.3px;line-height:13px;top:275.00px;color:#667084;letter-spacing:-0.101px;left:1220.00px;z-index:2;">РЕЗУЛЬТАТ</span>
<span class="t" style="font-size:9.3px;line-height:13px;top:275.00px;color:#667084;letter-spacing:-0.107px;left:1595.00px;z-index:2;">ФИЛЬТРЫ</span>
<span class="t" style="font-size:13px;line-height:18px;top:291.00px;color:#2c2c38;letter-spacing:0.028px;left:388.65px;z-index:0;">20:<i style="letter-spacing:-1.077px">1</i>8:03</span>
<span class="t" style="font-size:13px;line-height:18px;top:291.00px;color:#2c2c38;letter-spacing:-0.116px;left:479.50px;z-index:0;"><i style="letter-spacing:-1.221px">1</i><i style="letter-spacing:-1.221px">1</i>37<i style="letter-spacing:-1.221px">1</i>6<i style="letter-spacing:-1.221px">1</i>8652</span>
<span class="t" style="font-size:13px;line-height:18px;top:291.00px;color:#2c2c38;letter-spacing:-0.195px;left:601.00px;z-index:0;">Линия</span>
<span class="t" style="font-size:13px;line-height:18px;top:291.00px;color:#2c2c38;letter-spacing:0.147px;left:1166.30px;z-index:0;">500 ₽</span>
<span class="t" style="font-size:13px;line-height:18px;top:291.00px;color:#2c2c38;letter-spacing:-0.216px;left:1220.00px;z-index:0;">Проигрыш</span>
<span class="t" style="font-size:13px;line-height:18px;top:321.00px;color:#2c2c38;letter-spacing:0.028px;left:388.65px;z-index:1;"><i style="letter-spacing:-1.077px">1</i>4:43:40</span>
<span class="t" style="font-size:13px;line-height:18px;top:321.00px;color:#2c2c38;letter-spacing:-0.036px;left:478.55px;z-index:1;"><i style="letter-spacing:-1.141px">1</i><i style="letter-spacing:-1.141px">1</i>359550<i style="letter-spacing:-1.141px">1</i>80</span>
<span class="t" style="font-size:13px;line-height:18px;top:321.00px;color:#2c2c38;letter-spacing:-0.195px;left:601.00px;z-index:1;">Линия</span>
<span class="t" style="font-size:13px;line-height:18px;top:321.00px;color:#2c2c38;letter-spacing:0.147px;left:1166.30px;z-index:1;">400 ₽</span>
<span class="t" style="font-size:13px;line-height:18px;top:321.00px;color:#2c2c38;letter-spacing:-0.339px;left:1220.00px;z-index:1;">Выигрыш</span>
<span class="t" style="font-size:13px;line-height:18px;top:321.00px;color:#2c2c38;letter-spacing:-0.143px;left:1318.00px;z-index:1;">1 280 ₽</span>
<span class="t" style="font-size:13px;line-height:18px;top:351.00px;color:#2c2c38;letter-spacing:0.028px;left:388.65px;z-index:1;">02:4<i style="letter-spacing:-1.077px">1</i>:49</span>
<span class="t" style="font-size:13px;line-height:18px;top:351.00px;color:#2c2c38;letter-spacing:-0.036px;left:478.55px;z-index:1;"><i style="letter-spacing:-1.141px">1</i><i style="letter-spacing:-1.141px">1</i>3460377<i style="letter-spacing:-1.141px">1</i>4</span>
<span class="t" style="font-size:13px;line-height:18px;top:351.00px;color:#2c2c38;letter-spacing:-0.195px;left:601.00px;z-index:1;">Линия</span>
<span class="t" style="font-size:13px;line-height:18px;top:351.00px;color:#2c2c38;letter-spacing:-0.328px;left:1168.20px;z-index:1;">150 ₽</span>
<span class="t" style="font-size:13px;line-height:18px;top:351.00px;color:#2c2c38;letter-spacing:-0.216px;left:1220.00px;z-index:1;">Проигрыш</span>
<span class="t" style="font-size:13px;line-height:18px;top:381.00px;color:#2c2c38;letter-spacing:-0.086px;left:389.60px;z-index:1;">0<i style="letter-spacing:-1.191px">1</i>:03:<i style="letter-spacing:-1.191px">1</i>7</span>
<span class="t" style="font-size:13px;line-height:18px;top:381.00px;color:#2c2c38;letter-spacing:0.043px;left:477.60px;z-index:1;"><i style="letter-spacing:-1.062px">1</i><i style="letter-spacing:-1.062px">1</i>342970439</span>
<span class="t" style="font-size:13px;line-height:18px;top:381.00px;color:#2c2c38;letter-spacing:-0.195px;left:601.00px;z-index:1;">Линия</span>
<span class="t" style="font-size:13px;line-height:18px;top:381.00px;color:#2c2c38;letter-spacing:-0.226px;left:1157.40px;z-index:1;">1 000 ₽</span>
<span class="t" style="font-size:13px;line-height:18px;top:381.00px;color:#2c2c38;letter-spacing:-0.339px;left:1220.00px;z-index:1;">Выигрыш</span>
<span class="t" style="font-size:13px;line-height:18px;top:381.00px;color:#2c2c38;letter-spacing:0.174px;left:1318.00px;z-index:1;">2 050 ₽</span>
<span class="t" style="font-size:13px;line-height:18px;top:411.00px;color:#2e4972;font-weight:700;letter-spacing:-0.537px;left:340.80px;z-index:1;">29.12</span>
<span class="t" style="font-size:13px;line-height:18px;top:411.00px;color:#2c2c38;letter-spacing:0.142px;left:387.70px;z-index:1;">23:08:50</span>
<span class="t" style="font-size:13px;line-height:18px;top:411.00px;color:#2c2c38;letter-spacing:0.043px;left:477.60px;z-index:1;"><i style="letter-spacing:-1.062px">1</i><i style="letter-spacing:-1.062px">1</i>338307296</span>
<span class="t" style="font-size:13px;line-height:18px;top:411.00px;color:#2c2c38;letter-spacing:-0.195px;left:601.00px;z-index:1;">Линия</span>
<span class="t" style="font-size:13px;line-height:18px;top:411.00px;color:#2c2c38;letter-spacing:0.147px;left:1166.30px;z-index:1;">400 ₽</span>
<span class="t" style="font-size:13px;line-height:18px;top:411.00px;color:#2c2c38;letter-spacing:-0.216px;left:1220.00px;z-index:1;">Проигрыш</span>
<span class="t" style="font-size:13px;line-height:18px;top:441.00px;color:#2c2c38;letter-spacing:0.142px;left:387.70px;z-index:1;">22:06:00</span>
<span class="t" style="font-size:13px;line-height:18px;top:441.00px;color:#2c2c38;letter-spacing:0.043px;left:477.60px;z-index:1;"><i style="letter-spacing:-1.062px">1</i><i style="letter-spacing:-1.062px">1</i>335700973</span>
<span class="t" style="font-size:13px;line-height:18px;top:441.00px;color:#2c2c38;letter-spacing:-0.195px;left:601.00px;z-index:1;">Линия</span>
<span class="t" style="font-size:13px;line-height:18px;top:441.00px;color:#2c2c38;letter-spacing:0.147px;left:1166.30px;z-index:1;">600 ₽</span>
<span class="t" style="font-size:13px;line-height:18px;top:441.00px;color:#2c2c38;letter-spacing:-0.216px;left:1220.00px;z-index:1;">Проигрыш</span>
<span class="t" style="font-size:13px;line-height:18px;top:471.00px;color:#2c2c38;letter-spacing:0.028px;left:388.65px;z-index:1;">2<i style="letter-spacing:-1.077px">1</i>:57:46</span>
<span class="t" style="font-size:13px;line-height:18px;top:471.00px;color:#2c2c38;letter-spacing:0.043px;left:477.60px;z-index:1;"><i style="letter-spacing:-1.062px">1</i><i style="letter-spacing:-1.062px">1</i>335362622</span>
<span class="t" style="font-size:13px;line-height:18px;top:471.00px;color:#2c2c38;letter-spacing:-0.195px;left:601.00px;z-index:1;">Линия</span>
<span class="t" style="font-size:13px;line-height:18px;top:471.00px;color:#2c2c38;letter-spacing:0.147px;left:1166.30px;z-index:1;">832 ₽</span>
<span class="t" style="font-size:13px;line-height:18px;top:471.00px;color:#2c2c38;letter-spacing:-0.216px;left:1220.00px;z-index:1;">Проигрыш</span>
<span class="t" style="font-size:13px;line-height:18px;top:717.00px;color:#2c2c38;letter-spacing:-0.243px;left:389.60px;z-index:1;">0<i style="letter-spacing:-1.348px">1</i>:00:0<i style="letter-spacing:-1.348px">1</i></span>
<span class="t" style="font-size:13px;line-height:18px;top:717.00px;color:#2c2c38;letter-spacing:0.043px;left:477.60px;z-index:1;"><i style="letter-spacing:-1.062px">1</i><i style="letter-spacing:-1.062px">1</i>303070992</span>
<span class="t" style="font-size:13px;line-height:18px;top:717.00px;color:#2c2c38;letter-spacing:-0.195px;left:601.00px;z-index:1;">Линия</span>
<span class="t" style="font-size:13px;line-height:18px;top:717.00px;color:#2c2c38;letter-spacing:0.147px;left:1166.30px;z-index:1;">874 ₽</span>
<span class="t" style="font-size:13px;line-height:18px;top:717.00px;color:#2c2c38;letter-spacing:-0.339px;left:1220.00px;z-index:1;">Выигрыш</span>
<span class="t" style="font-size:13px;line-height:18px;top:717.00px;color:#2c2c38;letter-spacing:0.174px;left:1318.00px;z-index:1;">2 832 ₽</span>
<span class="t" style="font-size:13px;line-height:18px;top:747.00px;color:#2e4972;font-weight:700;letter-spacing:-0.537px;left:340.80px;z-index:1;">28.12</span>
<span class="t" style="font-size:13px;line-height:18px;top:747.00px;color:#2c2c38;letter-spacing:0.142px;left:387.70px;z-index:1;">22:57:03</span>
<span class="t" style="font-size:13px;line-height:18px;top:747.00px;color:#2c2c38;letter-spacing:-0.036px;left:478.55px;z-index:1;"><i style="letter-spacing:-1.141px">1</i><i style="letter-spacing:-1.141px">1</i>2976489<i style="letter-spacing:-1.141px">1</i>7</span>
<span class="t" style="font-size:13px;line-height:18px;top:747.00px;color:#2c2c38;letter-spacing:-0.195px;left:601.00px;z-index:1;">Линия</span>
<span class="t" style="font-size:13px;line-height:18px;top:747.00px;color:#2c2c38;letter-spacing:-0.226px;left:1157.40px;z-index:1;">1 000 ₽</span>
<span class="t" style="font-size:13px;line-height:18px;top:747.00px;color:#2c2c38;letter-spacing:-0.128px;left:1220.00px;z-index:1;">Продажа</span>
<span class="t" style="font-size:13px;line-height:18px;top:747.00px;color:#2c2c38;letter-spacing:0.272px;left:1318.00px;z-index:1;">874 ₽</span>
<span class="t" style="font-size:13px;line-height:18px;top:777.00px;color:#2c2c38;letter-spacing:-0.086px;left:389.60px;z-index:1;"><i style="letter-spacing:-1.191px">1</i>9:48:<i style="letter-spacing:-1.191px">1</i>2</span>
<span class="t" style="font-size:13px;line-height:18px;top:777.00px;color:#2c2c38;letter-spacing:0.043px;left:477.60px;z-index:1;"><i style="letter-spacing:-1.062px">1</i><i style="letter-spacing:-1.062px">1</i>289430333</span>
<span class="t" style="font-size:13px;line-height:18px;top:777.00px;color:#2c2c38;letter-spacing:-0.195px;left:601.00px;z-index:1;">Линия</span>
<span class="t" style="font-size:13px;line-height:18px;top:777.00px;color:#2c2c38;letter-spacing:0.147px;left:1166.30px;z-index:1;">500 ₽</span>
<span class="t" style="font-size:13px;line-height:18px;top:777.00px;color:#2c2c38;letter-spacing:-0.216px;left:1220.00px;z-index:1;">Проигрыш</span>
<span class="t" style="font-size:13px;line-height:18px;top:807.00px;color:#2e4972;font-weight:700;letter-spacing:-1.062px;left:341.85px;z-index:1;">27.12</span>
<span class="t" style="font-size:13px;line-height:18px;top:807.00px;color:#2c2c38;letter-spacing:0.028px;left:388.65px;z-index:1;">02:<i style="letter-spacing:-1.077px">1</i>3:06</span>
<span class="t" style="font-size:13px;line-height:18px;top:807.00px;color:#2c2c38;letter-spacing:0.043px;left:477.60px;z-index:1;"><i style="letter-spacing:-1.062px">1</i><i style="letter-spacing:-1.062px">1</i>233677660</span>
<span class="t" style="font-size:13px;line-height:18px;top:807.00px;color:#2c2c38;letter-spacing:-0.195px;left:601.00px;z-index:1;">Линия</span>
<span class="t" style="font-size:13px;line-height:18px;top:807.00px;color:#2c2c38;letter-spacing:0.147px;left:1166.30px;z-index:1;">600 ₽</span>
<span class="t" style="font-size:13px;line-height:18px;top:807.00px;color:#2c2c38;letter-spacing:-0.339px;left:1220.00px;z-index:1;">Выигрыш</span>
<span class="t" style="font-size:13px;line-height:18px;top:807.00px;color:#2c2c38;letter-spacing:-0.143px;left:1318.00px;z-index:1;">1 494 ₽</span>
<span class="t" style="font-size:13px;line-height:18px;top:837.00px;color:#2c2c38;letter-spacing:0.142px;left:387.70px;z-index:1;">00:29:59</span>
<span class="t" style="font-size:13px;line-height:18px;top:837.00px;color:#2c2c38;letter-spacing:-0.019px;left:479.50px;z-index:1;"><i style="letter-spacing:-1.124px">1</i><i style="letter-spacing:-1.124px">1</i>230776<i style="letter-spacing:-1.124px">1</i><i style="letter-spacing:-1.124px">1</i>2</span>
<span class="t" style="font-size:13px;line-height:18px;top:837.00px;color:#2c2c38;letter-spacing:-0.195px;left:601.00px;z-index:1;">Линия</span>
<span class="t" style="font-size:13px;line-height:18px;top:837.00px;color:#2c2c38;letter-spacing:0.147px;left:1166.30px;z-index:1;">400 ₽</span>
<span class="t" style="font-size:13px;line-height:18px;top:837.00px;color:#2c2c38;letter-spacing:-0.216px;left:1220.00px;z-index:1;">Проигрыш</span>
<span class="t" style="font-size:13px;line-height:18px;top:867.00px;color:#2e4972;font-weight:700;letter-spacing:-0.537px;left:340.80px;z-index:1;">26.12</span>
<span class="t" style="font-size:13px;line-height:18px;top:867.00px;color:#2c2c38;letter-spacing:0.142px;left:387.70px;z-index:1;">23:36:09</span>
<span class="t" style="font-size:13px;line-height:18px;top:867.00px;color:#2c2c38;letter-spacing:0.043px;left:477.60px;z-index:1;"><i style="letter-spacing:-1.062px">1</i><i style="letter-spacing:-1.062px">1</i>228734032</span>
<span class="t" style="font-size:13px;line-height:18px;top:867.00px;color:#2c2c38;letter-spacing:-0.195px;left:601.00px;z-index:1;">Линия</span>
<span class="t" style="font-size:13px;line-height:18px;top:867.00px;color:#2c2c38;letter-spacing:0.147px;left:1166.30px;z-index:1;">420 ₽</span>
<span class="t" style="font-size:13px;line-height:18px;top:867.00px;color:#2c2c38;letter-spacing:-0.216px;left:1220.00px;z-index:1;">Проигрыш</span>
<span class="t" style="font-size:13px;line-height:18px;top:897.00px;color:#2c2c38;letter-spacing:0.028px;left:388.65px;z-index:1;">2<i style="letter-spacing:-1.077px">1</i>:02:54</span>
<span class="t" style="font-size:13px;line-height:18px;top:897.00px;color:#2c2c38;letter-spacing:-0.036px;left:478.55px;z-index:1;"><i style="letter-spacing:-1.141px">1</i><i style="letter-spacing:-1.141px">1</i>22<i style="letter-spacing:-1.141px">1</i>959642</span>
<span class="t" style="font-size:13px;line-height:18px;top:897.00px;color:#2c2c38;letter-spacing:-0.195px;left:601.00px;z-index:1;">Линия</span>
<span class="t" style="font-size:13px;line-height:18px;top:897.00px;color:#2c2c38;letter-spacing:0.147px;left:1166.30px;z-index:1;">500 ₽</span>
<span class="t" style="font-size:13px;line-height:18px;top:897.00px;color:#2c2c38;letter-spacing:-0.216px;left:1220.00px;z-index:1;">Проигрыш</span>
<span class="t" style="font-size:13px;line-height:18px;top:927.00px;color:#2c2c38;letter-spacing:0.028px;left:388.65px;z-index:1;"><i style="letter-spacing:-1.077px">1</i>9:59:23</span>
<span class="t" style="font-size:13px;line-height:18px;top:927.00px;color:#2c2c38;letter-spacing:-0.036px;left:478.55px;z-index:1;"><i style="letter-spacing:-1.141px">1</i><i style="letter-spacing:-1.141px">1</i>2<i style="letter-spacing:-1.141px">1</i>9374927</span>
<span class="t" style="font-size:13px;line-height:18px;top:927.00px;color:#2c2c38;letter-spacing:-0.195px;left:601.00px;z-index:1;">Линия</span>
<span class="t" style="font-size:13px;line-height:18px;top:927.00px;color:#2c2c38;letter-spacing:0.147px;left:1166.30px;z-index:1;">500 ₽</span>
<span class="t" style="font-size:13px;line-height:18px;top:927.00px;color:#2c2c38;letter-spacing:-0.216px;left:1220.00px;z-index:1;">Проигрыш</span>
<span class="t" style="font-size:13px;line-height:18px;top:957.00px;color:#2c2c38;letter-spacing:-0.243px;left:389.60px;z-index:1;"><i style="letter-spacing:-1.348px">1</i>9:55:2<i style="letter-spacing:-1.348px">1</i></span>
<span class="t" style="font-size:13px;line-height:18px;top:957.00px;color:#2c2c38;letter-spacing:-0.116px;left:479.50px;z-index:1;"><i style="letter-spacing:-1.221px">1</i><i style="letter-spacing:-1.221px">1</i>2<i style="letter-spacing:-1.221px">1</i>92<i style="letter-spacing:-1.221px">1</i>2027</span>
<span class="t" style="font-size:13px;line-height:18px;top:957.00px;color:#2c2c38;letter-spacing:-0.195px;left:601.00px;z-index:1;">Линия</span>
<span class="t" style="font-size:13px;line-height:18px;top:957.00px;color:#2c2c38;letter-spacing:-0.226px;left:1157.40px;z-index:1;">1 000 ₽</span>
<span class="t" style="font-size:13px;line-height:18px;top:957.00px;color:#2c2c38;letter-spacing:-0.339px;left:1220.00px;z-index:1;">Выигрыш</span>
<span class="t" style="font-size:13px;line-height:18px;top:957.00px;color:#2c2c38;letter-spacing:0.174px;left:1318.00px;z-index:1;">3 420 ₽</span>
<span class="t" style="font-size:13px;line-height:18px;top:987.00px;color:#2e4972;font-weight:700;letter-spacing:-0.537px;left:340.80px;z-index:1;">25.12</span>
<span class="t" style="font-size:13px;line-height:18px;top:987.00px;color:#2c2c38;letter-spacing:0.028px;left:388.65px;z-index:1;"><i style="letter-spacing:-1.077px">1</i>8:32:54</span>
<span class="t" style="font-size:13px;line-height:18px;top:987.00px;color:#2c2c38;letter-spacing:0.061px;left:478.55px;z-index:1;"><i style="letter-spacing:-1.044px">1</i><i style="letter-spacing:-1.044px">1</i><i style="letter-spacing:-1.044px">1</i>87982742</span>
<span class="t" style="font-size:13px;line-height:18px;top:987.00px;color:#2c2c38;letter-spacing:-0.195px;left:601.00px;z-index:1;">Линия</span>
<span class="t" style="font-size:13px;line-height:18px;top:987.00px;color:#2c2c38;letter-spacing:0.147px;left:1166.30px;z-index:1;">500 ₽</span>
<span class="t" style="font-size:13px;line-height:18px;top:987.00px;color:#2c2c38;letter-spacing:-0.216px;left:1220.00px;z-index:1;">Проигрыш</span>
<span class="t" style="font-size:13px;line-height:18px;top:303.00px;color:#2e4972;font-weight:700;letter-spacing:-0.387px;left:340.70px;z-index:1;">30.12</span>
<span class="t" style="font-size:10.5px;line-height:15px;top:518.00px;color:#3b6392;font-weight:700;letter-spacing:-0.307px;left:362.50px;">Время начала</span>
<span class="t" style="font-size:10.5px;line-height:15px;top:518.00px;color:#3b6392;font-weight:700;letter-spacing:-0.315px;left:462.50px;">Событие</span>
<span class="t" style="font-size:10.5px;line-height:15px;top:518.00px;color:#3b6392;font-weight:700;letter-spacing:-0.255px;left:1043.00px;">Пари</span>
<span class="t" style="font-size:10.5px;line-height:15px;top:518.00px;color:#3b6392;font-weight:700;letter-spacing:-0.380px;left:1232.00px;">Коэффициент</span>
<span class="t" style="font-size:10.5px;line-height:15px;top:518.00px;color:#3b6392;font-weight:700;letter-spacing:-0.047px;left:1335.25px;">Счет</span>
<span class="t" style="font-size:10.5px;line-height:15px;top:518.00px;color:#3b6392;font-weight:700;letter-spacing:-0.104px;left:1487.00px;">Результат</span>
<span class="t" style="font-size:12px;line-height:17px;top:539.00px;color:#42424e;letter-spacing:-0.248px;left:362.30px;">29.12.2022 22:00</span>
<span class="t" style="font-size:12px;line-height:17px;top:539.00px;color:#42424e;letter-spacing:-0.202px;left:485.30px;">Бешикташ – Адана Демирспор: угловых в матче больше чем ударов в створ</span>
<span class="t" style="font-size:12px;line-height:17px;top:539.00px;color:#42424e;letter-spacing:-0.887px;left:1043.00px;">да</span>
<span class="t" style="font-size:12px;line-height:17px;top:539.00px;color:#42424e;letter-spacing:-0.253px;left:1279.30px;">2.35</span>
<span class="t" style="font-size:12px;line-height:17px;top:539.00px;color:#42424e;letter-spacing:-0.944px;left:1340.00px;">1:0</span>
<span class="t" style="font-size:12px;line-height:17px;top:539.00px;color:#42424e;letter-spacing:-0.241px;left:1481.60px;">Проигрыш</span>
<span class="t" style="font-size:11.5px;line-height:16px;top:586.00px;color:#24242e;letter-spacing:0.106px;left:369.00px;-webkit-text-stroke:0.2px #24242e;">Одинар</span>
<span class="t" style="font-size:11.5px;line-height:16px;top:587.00px;color:#24242e;letter-spacing:0.402px;left:615.00px;-webkit-text-stroke:0.2px #24242e;">832 ₽</span>
<span class="t" style="font-size:11.5px;line-height:16px;top:586.00px;color:#24242e;letter-spacing:0.203px;left:856.50px;-webkit-text-stroke:0.2px #24242e;">2.35</span>
<span class="t" style="font-size:11.5px;line-height:16px;top:586.00px;color:#24242e;left:1100.00px;-webkit-text-stroke:0.2px #24242e;">29.12.2022 21:57:46</span>
<span class="t" style="font-size:11.5px;line-height:16px;top:586.00px;color:#24242e;letter-spacing:0.063px;left:1376.00px;-webkit-text-stroke:0.2px #24242e;">Рассчитана 30.12.2022 00:07:14</span>
<span class="t" style="font-size:10.5px;line-height:15px;top:632.00px;color:#3b6392;font-weight:700;letter-spacing:-0.316px;left:391.25px;">№ Операции</span>
<span class="t" style="font-size:10.5px;line-height:15px;top:632.00px;color:#3b6392;font-weight:700;letter-spacing:-0.461px;left:491.25px;">Время</span>
<span class="t" style="font-size:10.5px;line-height:15px;top:632.00px;color:#3b6392;font-weight:700;letter-spacing:-0.246px;left:591.25px;">Тип операции</span>
<span class="t" style="font-size:10.5px;line-height:15px;top:632.00px;color:#3b6392;font-weight:700;letter-spacing:-0.033px;left:766.80px;">Сумма</span>
<span class="t" style="font-size:12px;line-height:17px;top:648.00px;color:#42424e;left:391.20px;">655179432-0002</span>
<span class="t" style="font-size:12px;line-height:17px;top:648.00px;color:#42424e;letter-spacing:-0.468px;left:491.20px;">29.12 21:57:46</span>
<span class="t" style="font-size:12px;line-height:17px;top:648.00px;color:#42424e;letter-spacing:-0.181px;left:591.20px;">Заключено пари</span>
<span class="t" style="font-size:12px;line-height:17px;top:648.00px;color:#42424e;letter-spacing:0.268px;left:765.50px;">-832 ₽</span>
<span class="t" style="font-size:12px;line-height:17px;top:665.00px;color:#42424e;left:391.20px;">655179432-0005</span>
<span class="t" style="font-size:12px;line-height:17px;top:665.00px;color:#42424e;letter-spacing:-0.468px;left:491.20px;">30.12 00:07:14</span>
<span class="t" style="font-size:12px;line-height:17px;top:665.00px;color:#42424e;letter-spacing:-0.215px;left:591.20px;">Пари проиграно</span>
<span class="t" style="font-size:12px;line-height:17px;top:665.00px;color:#42424e;letter-spacing:0.192px;left:783.80px;">0 ₽</span>
<span class="t" style="font-size:13px;line-height:18px;top:664.00px;color:#44597c;letter-spacing:-0.160px;left:1413.70px;">Задать вопрос по пари</span>
<span class="t" style="font-size:14px;line-height:20px;top:311.00px;color:#3b4658;letter-spacing:-0.243px;left:1596.50px;">Тип пари</span>
<span class="t" style="font-size:14px;line-height:20px;top:374.00px;color:#3b4658;letter-spacing:-0.146px;left:1596.50px;">Результат</span>
<span class="t" style="font-size:13px;line-height:18px;top:339.00px;color:#2c2c38;letter-spacing:-0.245px;left:1618.20px;">Линия</span>
<span class="t" style="font-size:13px;line-height:18px;top:400.00px;color:#2c2c38;letter-spacing:-0.244px;left:1618.20px;">Не рассчитана</span>
<span class="t" style="font-size:13px;line-height:18px;top:430.00px;color:#2c2c38;letter-spacing:-0.322px;left:1618.20px;">Выигрыш</span>
<span class="t" style="font-size:13px;line-height:18px;top:460.00px;color:#2c2c38;letter-spacing:-0.245px;left:1618.20px;">Проигрыш</span>
<span class="t" style="font-size:13px;line-height:18px;top:490.00px;color:#2c2c38;letter-spacing:-0.161px;left:1618.20px;">Продажа</span>
<span class="t" style="font-size:13px;line-height:18px;top:520.00px;color:#2c2c38;letter-spacing:-0.471px;left:1618.20px;">Отмена</span>
<span class="t" style="font-size:13px;line-height:18px;top:550.00px;color:#2c2c38;letter-spacing:-0.325px;left:1618.20px;">Возврат</span>
<span class="t" style="font-size:15px;line-height:21px;top:1050.00px;color:#222222;letter-spacing:-0.224px;left:88.00px;">Введите здесь текст для поиска</span>
<span class="t" style="font-size:11.5px;line-height:16px;top:1052.00px;color:#ffffff;letter-spacing:-0.761px;left:1771.00px;">ENG</span>
<span class="t" style="font-size:11.5px;line-height:16px;top:1043.00px;color:#ffffff;letter-spacing:-0.395px;left:1820.30px;">16:27</span>
<span class="t" style="font-size:11.5px;line-height:16px;top:1060.00px;color:#ffffff;letter-spacing:-0.329px;left:1806.40px;">01.01.2023</span>
<span class="t" style="font-size:10px;line-height:14px;top:1061.00px;color:#ffffff;font-weight:700;letter-spacing:-1.125px;left:1890.00px;">10</span>
<span class="t" style="font-size:12px;line-height:17px;top:10.00px;color:#ffffff;left:12.66px;-webkit-text-stroke:0.3px #fff;">1</span>
</div>
</body></html>
